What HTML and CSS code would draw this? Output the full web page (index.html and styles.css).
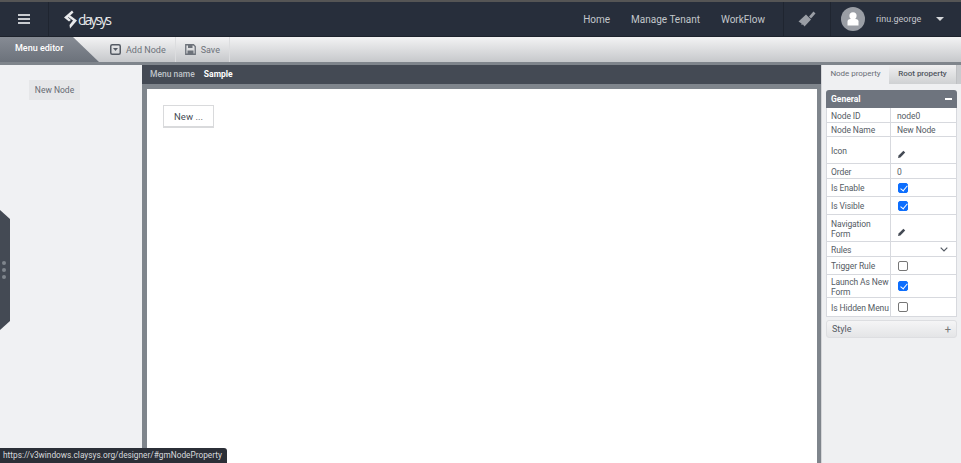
FILE: index.html
```html
<!DOCTYPE html>
<html lang="en">
<head>
  <meta charset="UTF-8">
  <title>Menu editor</title>
  <link rel="stylesheet" href="styles.css">
</head>
<body>

  <!-- top navigation -->
  <header class="topbar">
    <div class="burger-cell">
      <span class="burger"><i></i><i></i><i></i></span>
    </div>
    <div class="logo">
      <svg class="logo-mark" width="15" height="19" viewBox="0 0 15 19">
        <path d="M9 0.5 L1 7.5 L6 11.5 L8 10 L5 7.5 L10.5 2.5 Z" fill="#e8eaec"/>
        <path d="M6 4.5 L14 10.5 L7 18.5 L6.5 15 L10 10.5 L4.5 6.5 Z" fill="#e8eaec"/>
      </svg>
      <span class="logo-text">claysys</span>
    </div>
    <nav class="topnav">
      <a>Home</a>
      <a>Manage Tenant</a>
      <a>WorkFlow</a>
    </nav>
    <div class="brush-cell">
      <svg width="18" height="16" viewBox="0 0 18 16">
        <path d="M11 5.5 L15.5 0.5 L17.5 2.5 L13 7.5 Z" fill="#9a9ea5"/>
        <path d="M0.5 10.5 L8 3.5 L13 8.5 L6.5 15.5 L5 13.5 L3.5 14 L3.5 12.5 Z" fill="#9a9ea5"/>
      </svg>
    </div>
    <div class="user-cell">
      <span class="avatar">
        <svg width="12" height="14" viewBox="0 0 12 14">
          <circle cx="6" cy="3.8" r="3.6" fill="#fff"/>
          <path d="M0.5 13.5 V9.5 Q0.5 7 3.5 7 H8.5 Q11.5 7 11.5 9.5 V13.5 Z" fill="#fff"/>
        </svg>
      </span>
      <span class="username">rinu.george</span>
      <span class="caret"></span>
    </div>
  </header>

  <!-- toolbar -->
  <div class="toolbar">
    <div class="toolbar-title">Menu editor</div>
    <div class="tool tool-add">
      <svg width="11" height="11" viewBox="0 0 11 11">
        <rect x="0.75" y="0.75" width="9.5" height="9.5" rx="1.5" fill="none" stroke="#555b64" stroke-width="1.5"/>
        <path d="M3 4 H8 L5.5 7 Z" fill="#555b64"/>
      </svg>
      <span>Add Node</span>
    </div>
    <div class="tool">
      <svg width="11" height="11" viewBox="0 0 11 11">
        <path d="M0.75 0.75 H8.5 L10.25 2.5 V10.25 H0.75 Z" fill="none" stroke="#6d727a" stroke-width="1.3"/>
        <rect x="3" y="1" width="4.5" height="3" fill="#6d727a"/>
        <rect x="2.5" y="6.5" width="6" height="3.5" fill="#6d727a"/>
      </svg>
      <span>Save</span>
    </div>
  </div>

  <div class="main">
    <!-- node tree -->
    <aside class="tree">
      <div class="tree-node">New Node</div>
    </aside>

    <!-- canvas -->
    <section class="center">
      <div class="menu-name">
        <span class="menu-label">Menu name</span>
        <span class="menu-value">Sample</span>
      </div>
      <div class="canvas">
        <div class="canvas-node">New ...</div>
      </div>
    </section>

    <!-- properties -->
    <aside class="props">
      <div class="tabs">
        <div class="tab active">Node property</div>
        <div class="tab">Root property</div>
      </div>

      <div class="group-head">
        <span>General</span>
        <span class="minus"></span>
      </div>
      <div class="prop-table">
        <div class="row h15"><div class="key">Node ID</div><div class="val">node0</div></div>
        <div class="row h14"><div class="key">Node Name</div><div class="val">New Node</div></div>
        <div class="row h27">
          <div class="key">Icon</div>
          <div class="val val-end"><svg class="pencil" width="8" height="8" viewBox="0 0 8 8"><path d="M0 8 L0.6 5.6 L5.4 0.8 L7.2 2.6 L2.4 7.4 Z" fill="#444a54"/></svg></div>
        </div>
        <div class="row h15"><div class="key">Order</div><div class="val">0</div></div>
        <div class="row h18"><div class="key">Is Enable</div><div class="val"><span class="check on"></span></div></div>
        <div class="row h18"><div class="key">Is Visible</div><div class="val"><span class="check on"></span></div></div>
        <div class="row h27">
          <div class="key">Navigation Form</div>
          <div class="val val-end"><svg class="pencil" width="8" height="8" viewBox="0 0 8 8"><path d="M0 8 L0.6 5.6 L5.4 0.8 L7.2 2.6 L2.4 7.4 Z" fill="#444a54"/></svg></div>
        </div>
        <div class="row h15">
          <div class="key">Rules</div>
          <div class="val val-select"><svg width="8" height="5" viewBox="0 0 8 5"><path d="M0.7 0.7 L4 4 L7.3 0.7" fill="none" stroke="#555b64" stroke-width="1.2"/></svg></div>
        </div>
        <div class="row h18"><div class="key">Trigger Rule</div><div class="val"><span class="check"></span></div></div>
        <div class="row h23"><div class="key">Launch As New Form</div><div class="val"><span class="check on"></span></div></div>
        <div class="row h18"><div class="key">Is Hidden Menu</div><div class="val"><span class="check"></span></div></div>
      </div>

      <div class="group-closed">
        <span>Style</span>
        <span class="plus">+</span>
      </div>
    </aside>
  </div>

  <!-- collapsed side handle -->
  <div class="side-handle"><i></i><i></i><i></i></div>

  <!-- browser status bubble -->
  <div class="status-url">https://v3windows.claysys.org/designer/#gmNodeProperty</div>

</body>
</html>
```

FILE: styles.css
```css
* {
  box-sizing: border-box;
}

html, body {
  height: 100%;
}

body {
  margin: 0;
  font-family: Roboto, "Liberation Sans", sans-serif;
  font-size: 8.5px;
  color: #555b64;
  background-color: #eff0f2;
  display: flex;
  flex-direction: column;
  overflow: hidden;
  position: relative;
}

.topbar {
  height: 37px;
  flex: none;
  display: flex;
  align-items: stretch;
  background-color: #272e3b;
  border-top: 2px solid #555;
  border-bottom: 1px solid #1d222c;
}

.burger-cell {
  width: 49px;
  display: flex;
  align-items: center;
  justify-content: center;
  border-right: 1px solid #1f2530;
}

.burger i {
  display: block;
  width: 12px;
  height: 2px;
  margin: 2px 0;
  background-color: #c9ccd1;
}

.logo {
  display: flex;
  align-items: center;
  padding-left: 14px;
}

.logo-text {
  font-size: 14px;
  letter-spacing: -1.9px;
  color: #e8eaec;
  font-family: "Open Sans", sans-serif;
}

.topnav {
  margin-left: auto;
  display: flex;
  align-items: center;
  gap: 21px;
  padding-right: 18px;
  font-size: 10px;
}

.topnav a {
  color: #c3c7cc;
}

.brush-cell {
  width: 48px;
  display: flex;
  align-items: center;
  justify-content: center;
  border-left: 1px solid #1f2530;
  border-right: 1px solid #1f2530;
}

.user-cell {
  width: 130px;
  display: flex;
  align-items: center;
  padding-left: 10px;
  color: #c3c7cc;
  font-size: 9px;
}

.avatar {
  width: 24px;
  height: 24px;
  border-radius: 50%;
  background-color: #9a9ea5;
  display: flex;
  align-items: center;
  justify-content: center;
  margin-right: 11px;
}

.username {
  margin-right: 15px;
}

.caret {
  width: 0;
  height: 0;
  border-left: 4px solid transparent;
  border-right: 4px solid transparent;
  border-top: 4px solid #d5d7da;
}

.toolbar {
  height: 25px;
  flex: none;
  display: flex;
  background: linear-gradient(#f3f3f4, #c6c8cb);
  color: #6d727a;
  font-size: 9px;
}

.toolbar-title {
  width: 99px;
  padding-left: 15px;
  line-height: 23px;
  font-weight: 500;
  color: #fff;
  background: linear-gradient(#868b94, #6c727b);
  clip-path: polygon(0 0, 73px 0, 99px 100%, 0 100%);
}

.tool {
  display: flex;
  align-items: center;
  gap: 5px;
  padding: 0 9px;
  border-right: 1px solid #dcdddf;
}

.tool-add {
  padding-left: 11px;
}

.main {
  flex: 1;
  display: flex;
  min-height: 0;
  border-top: 3px solid #7f858c;
}

.tree {
  width: 142px;
  flex: none;
  background-color: #f0f1f3;
  padding: 15px 0 0 29px;
}

.tree-node {
  width: 51px;
  height: 20px;
  line-height: 20px;
  text-align: center;
  background-color: #e6e7e9;
  color: #666b73;
}

.center {
  flex: 1;
  display: flex;
  flex-direction: column;
  min-width: 0;
}

.menu-name {
  height: 19px;
  flex: none;
  display: flex;
  align-items: center;
  gap: 9px;
  padding: 0 0 2px 8px;
  background-color: #444a54;
  font-weight: 500;
}

.menu-label {
  color: #bfc3c8;
}

.menu-value {
  color: #fff;
  font-weight: 700;
}

.canvas {
  flex: 1;
  background-color: #fff;
  border: solid #7f858c;
  border-width: 5px 4px 0 5px;
  padding: 16px;
}

.canvas-node {
  width: 51px;
  height: 23px;
  line-height: 21px;
  text-align: center;
  font-size: 9.5px;
  color: #444a54;
  border: 1px solid #d9dadc;
  border-bottom-width: 2px;
}

.props {
  width: 140px;
  flex: none;
  background-color: #eff0f2;
  border-left: 1px solid #d5d6d9;
}

.tabs {
  height: 19px;
  display: flex;
  background-color: #c9cbce;
}

.tab {
  width: 68px;
  line-height: 17px;
  text-align: center;
  font-size: 8px;
  font-weight: 500;
  letter-spacing: -0.05px;
  color: #50555e;
  background: linear-gradient(#f0f0f1, #cfd1d3);
  border-right: 1px solid #bfc1c4;
}

.tab.active {
  width: 67px;
  font-weight: 400;
  color: #6a6f77;
  background: #eff0f2;
  border-right: 0;
}

.group-head {
  height: 18px;
  margin: 6px 4px 0;
  padding: 0 5px;
  display: flex;
  align-items: center;
  justify-content: space-between;
  background-color: #6e747e;
  border-radius: 3px 3px 0 0;
  color: #fff;
  font-weight: 700;
}

.minus {
  width: 7px;
  height: 2px;
  background-color: #fff;
}

.prop-table {
  margin: 0 4px;
  background-color: #fff;
  border: 1px solid #d7d9de;
  border-top: 0;
  letter-spacing: -0.1px;
}

.row {
  display: flex;
  border-bottom: 1px solid #d7d9de;
}

.row:last-child {
  border-bottom: 0;
}

.h14 { height: 14px; }
.h15 { height: 15px; }
.h18 { height: 18px; }
.h23 { height: 23px; }
.h27 { height: 27px; }

.key {
  width: 64px;
  flex: none;
  padding: 1px 1px 0 4px;
  display: flex;
  align-items: center;
  line-height: 10px;
  border-right: 1px solid #d7d9de;
}

.val {
  flex: 1;
  padding: 1px 0 0 6px;
  display: flex;
  align-items: center;
}

.val-end {
  align-items: flex-end;
  padding-bottom: 5px;
  padding-left: 7px;
}

.val-select {
  justify-content: flex-end;
  padding-right: 8px;
}

.check {
  width: 10px;
  height: 10px;
  margin: -1px 0 0 1px;
  border: 1px solid #767676;
  border-radius: 2px;
  background-color: #fff;
  position: relative;
}

.check.on {
  background-color: #0d6efd;
  border-color: #0d6efd;
}

.check.on::after {
  content: "";
  position: absolute;
  left: 2.5px;
  top: 0;
  width: 3px;
  height: 6px;
  border: solid #fff;
  border-width: 0 1.5px 1.5px 0;
  transform: rotate(40deg);
}

.group-closed {
  height: 18px;
  margin: 3px 4px 0;
  padding: 0 5px;
  display: flex;
  align-items: center;
  justify-content: space-between;
  border: 1px solid #dddee1;
  border-radius: 3px;
  background: linear-gradient(#f5f5f6, #e4e5e7);
  font-size: 9px;
}

.plus {
  font-size: 11px;
  color: #777;
}

.side-handle {
  position: absolute;
  left: 0;
  top: 210px;
  width: 10px;
  height: 120px;
  padding-top: 51px;
  background-color: #444a54;
  clip-path: polygon(0 0, 100% 9px, 100% 111px, 0 100%);
}

.side-handle i {
  display: block;
  width: 4px;
  height: 4px;
  margin: 0 0 3px 2px;
  border-radius: 50%;
  background-color: #7f858c;
}

.status-url {
  position: absolute;
  left: 0;
  bottom: 0;
  height: 15px;
  width: 227px;
  padding-left: 3px;
  line-height: 15px;
  white-space: nowrap;
  overflow: hidden;
  font-size: 8.3px;
  color: #d8dadd;
  background-color: #2b2f37;
  border-top-right-radius: 3px;
}
```
